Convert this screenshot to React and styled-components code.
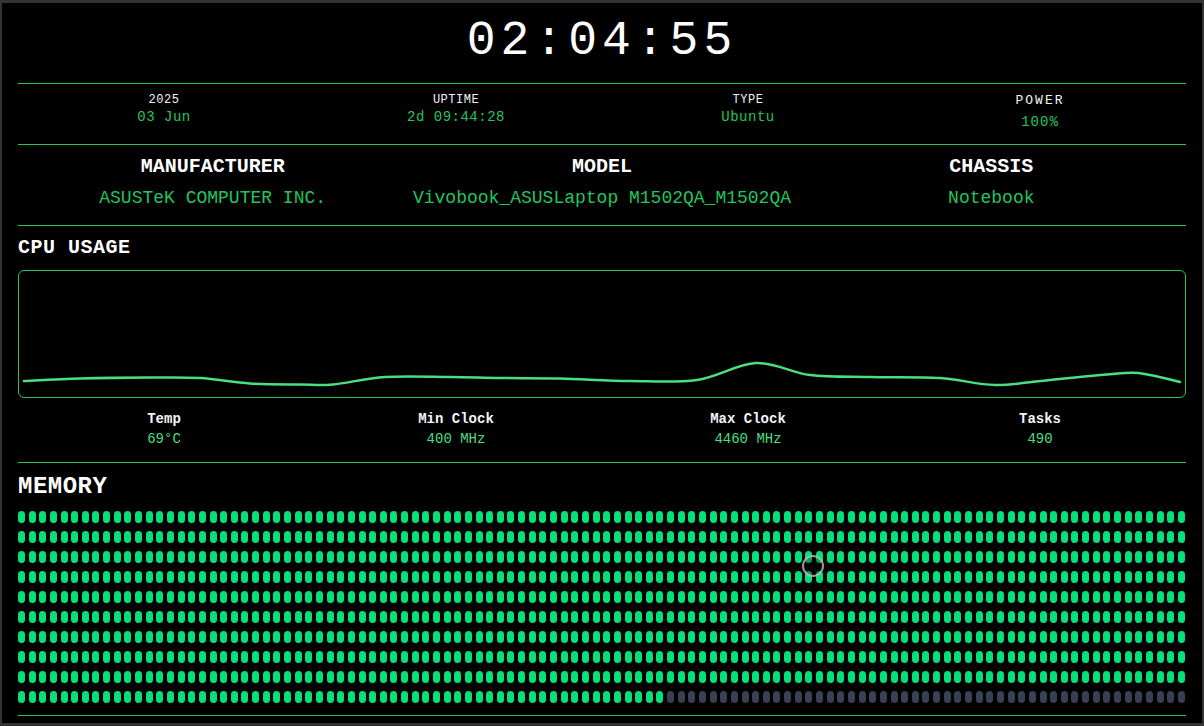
import React from 'react'
import styled, { createGlobalStyle } from 'styled-components'

const GlobalStyle = createGlobalStyle`
  * { box-sizing: border-box; }
  html, body { margin: 0; padding: 0; background: #000; }
  body { font-family: "Liberation Mono", "DejaVu Sans Mono", monospace; }
`

const Screen = styled.div`
  width: 1204px;
  height: 726px;
  background: #000;
  border-style: solid;
  border-color: #333;
  border-width: 3px 2px 3px 2px;
  padding: 0 16px;
  color: #f5f5f5;
  overflow: hidden;
`

const Section = styled.section`
  border-bottom: 1px solid #22c55e;
`

const ClockSection = styled(Section)`
  height: 81px;
  padding-top: 10px;
  text-align: center;
`

const Clock = styled.div`
  font-size: 48px;
  line-height: 56px;
  letter-spacing: 5px;
  color: #fff;
`

const InfoRow = styled(Section)`
  height: 61px;
  display: grid;
  grid-template-columns: repeat(4, 1fr);
  padding-top: 9px;
`

const InfoCell = styled.div`
  display: flex;
  flex-direction: column;
  align-items: center;
`

const InfoLabel = styled.div`
  font-size: ${p => (p.$big ? '13px' : '12px')};
  line-height: ${p => (p.$big ? '16px' : '14px')};
  letter-spacing: ${p => (p.$big ? '2px' : '0.5px')};
  color: #f3f4f6;
`

const InfoValue = styled.div`
  font-size: 14px;
  line-height: 18px;
  margin-top: ${p => (p.$big ? '4px' : '1px')};
  letter-spacing: ${p => (p.$big ? '1px' : '0.5px')};
  color: #22c55e;
`

const HardwareRow = styled(Section)`
  height: 81px;
  display: grid;
  grid-template-columns: repeat(3, 1fr);
  padding-top: 10px;
`

const HardwareCell = styled.div`
  display: flex;
  flex-direction: column;
  align-items: center;
  gap: 8px;
`

const HardwareLabel = styled.div`
  font-size: 20px;
  line-height: 24px;
  font-weight: 700;
  color: #fff;
`

const HardwareValue = styled.div`
  font-size: 18px;
  line-height: 22px;
  color: #22c55e;
`

const CpuSection = styled(Section)`
  height: 237px;
  padding-top: 10px;
`

const SectionTitle = styled.h2`
  margin: 0;
  font-size: ${p => p.$size || 20}px;
  line-height: ${p => (p.$size ? p.$size + 4 : 24)}px;
  font-weight: 700;
  letter-spacing: 0.5px;
  color: #fff;
`

const ChartBox = styled.div`
  margin-top: 10px;
  height: 128px;
  border: 1px solid #22c55e;
  border-radius: 6px;
  overflow: hidden;
`

const StatsRow = styled.div`
  display: grid;
  grid-template-columns: repeat(4, 1fr);
  margin-top: 12px;
`

const Stat = styled.div`
  display: flex;
  flex-direction: column;
  align-items: center;
  gap: 2px;
`

const StatLabel = styled.div`
  font-size: 14px;
  line-height: 18px;
  font-weight: 700;
  color: #f3f4f6;
`

const StatValue = styled.div`
  font-size: 14px;
  line-height: 18px;
  color: #4ade80;
`

const MemorySection = styled(Section)`
  height: 253px;
  padding-top: 10px;
`

const MemoryGrid = styled.div`
  position: relative;
  margin-top: 10px;
  display: flex;
  flex-direction: column;
  gap: 8px;
`

const MemoryRow = styled.div`
  display: flex;
  justify-content: space-between;
`

const Cell = styled.span`
  width: 7px;
  height: 12px;
  border-radius: 4px;
  background: ${p => (p.$used ? '#05e07a' : '#374151')};
`

const CursorRing = styled.div`
  position: absolute;
  left: 784px;
  top: 44px;
  width: 22px;
  height: 22px;
  border-radius: 50%;
  border: 2px solid rgba(200, 200, 200, 0.75);
  background: rgba(0, 0, 0, 0.3);
`

const chartPoints = [
  [24, 381], [80, 378.5], [150, 377.5], [200, 378], [250, 383.5], [300, 384.5],
  [333, 384.5], [385, 377], [450, 377], [500, 378], [560, 378.5], [630, 381],
  [697, 380], [756, 363], [810, 375], [870, 377], [940, 378], [995, 385],
  [1050, 380], [1125, 373], [1150, 375], [1180, 382],
].map(([x, y]) => [x - 19, y - 271])

function smoothPath(pts) {
  let d = `M ${pts[0][0]} ${pts[0][1]}`
  for (let i = 0; i < pts.length - 1; i++) {
    const p0 = pts[i - 1] || pts[i]
    const p1 = pts[i]
    const p2 = pts[i + 1]
    const p3 = pts[i + 2] || p2
    const c1x = p1[0] + (p2[0] - p0[0]) / 6
    const c1y = p1[1] + (p2[1] - p0[1]) / 6
    const c2x = p2[0] - (p3[0] - p1[0]) / 6
    const c2y = p2[1] - (p3[1] - p1[1]) / 6
    d += ` C ${c1x} ${c1y}, ${c2x} ${c2y}, ${p2[0]} ${p2[1]}`
  }
  return d
}

const CpuChart = () => (
  <svg width="100%" height="100%" viewBox="0 0 1166 126" preserveAspectRatio="none">
    <path d={smoothPath(chartPoints)} fill="none" stroke="#4ade80" strokeWidth="2.5" strokeLinecap="round" />
  </svg>
)

const info = [
  { label: '2025', value: '03 Jun' },
  { label: 'UPTIME', value: '2d 09:44:28' },
  { label: 'TYPE', value: 'Ubuntu' },
  { label: 'POWER', value: '100%', big: true },
]

const hardware = [
  { label: 'MANUFACTURER', value: 'ASUSTeK COMPUTER INC.' },
  { label: 'MODEL', value: 'Vivobook_ASUSLaptop M1502QA_M1502QA' },
  { label: 'CHASSIS', value: 'Notebook' },
]

const stats = [
  { label: 'Temp', value: '69°C' },
  { label: 'Min Clock', value: '400 MHz' },
  { label: 'Max Clock', value: '4460 MHz' },
  { label: 'Tasks', value: '490' },
]

const COLS = 110
const ROWS = 10
const USED = 9 * COLS + 61

const App = () => {
  return (
    <>
      <GlobalStyle />
      <Screen>
        <ClockSection>
          <Clock>02:04:55</Clock>
        </ClockSection>

        <InfoRow>
          {info.map(item => (
            <InfoCell key={item.label}>
              <InfoLabel $big={item.big}>{item.label}</InfoLabel>
              <InfoValue $big={item.big}>{item.value}</InfoValue>
            </InfoCell>
          ))}
        </InfoRow>

        <HardwareRow>
          {hardware.map(item => (
            <HardwareCell key={item.label}>
              <HardwareLabel>{item.label}</HardwareLabel>
              <HardwareValue>{item.value}</HardwareValue>
            </HardwareCell>
          ))}
        </HardwareRow>

        <CpuSection>
          <SectionTitle>CPU USAGE</SectionTitle>
          <ChartBox>
            <CpuChart />
          </ChartBox>
          <StatsRow>
            {stats.map(s => (
              <Stat key={s.label}>
                <StatLabel>{s.label}</StatLabel>
                <StatValue>{s.value}</StatValue>
              </Stat>
            ))}
          </StatsRow>
        </CpuSection>

        <MemorySection>
          <SectionTitle $size={24}>MEMORY</SectionTitle>
          <MemoryGrid>
            {Array.from({ length: ROWS }, (_, r) => (
              <MemoryRow key={r}>
                {Array.from({ length: COLS }, (_, c) => (
                  <Cell key={c} $used={r * COLS + c < USED} />
                ))}
              </MemoryRow>
            ))}
            <CursorRing />
          </MemoryGrid>
        </MemorySection>
      </Screen>
    </>
  )
}

export default App
